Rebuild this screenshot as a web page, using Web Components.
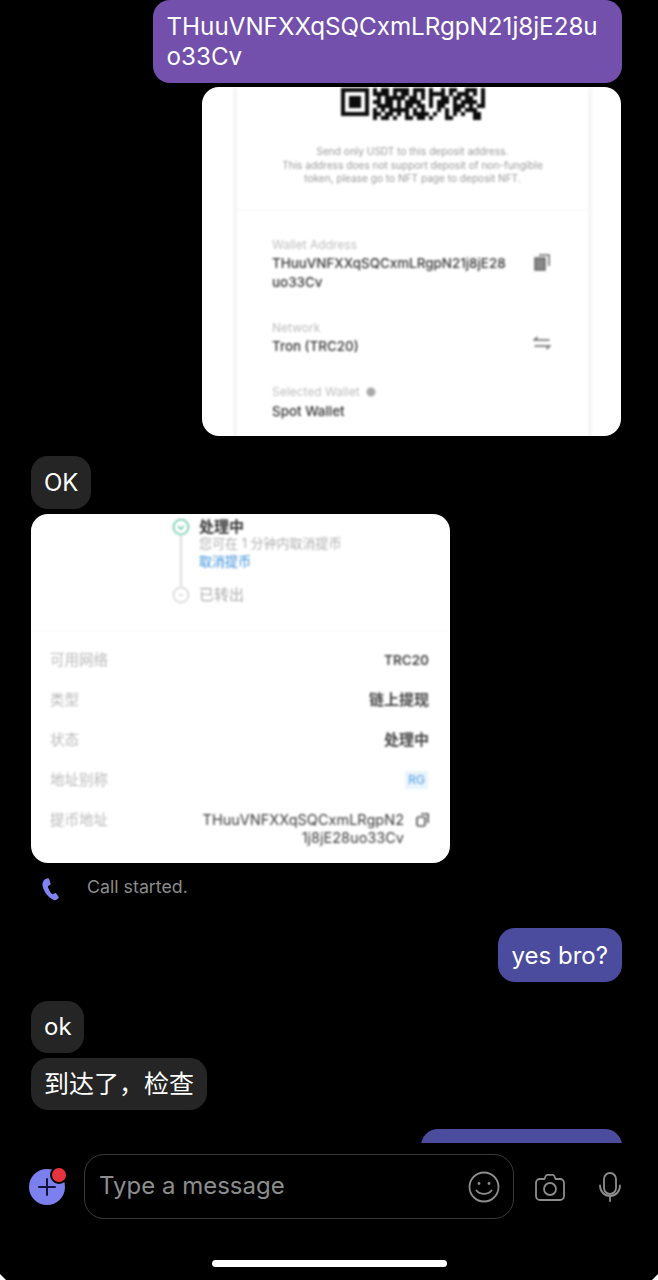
<!DOCTYPE html>
<html lang="en">
<head>
<meta charset="utf-8">
<title>Chat</title>
<style>
  html, body { margin: 0; height: 100%; background: #000; }
  body { font-family: Inter, "Noto Sans CJK SC", sans-serif; overflow: hidden; }
</style>
</head>
<body>
<chat-screen>
  <msg-group side="end" tight>
    <chat-bubble tone="purple">THuuVNFXXqSQCxmLRgpN21j8jE28uo33Cv</chat-bubble>
    <deposit-shot></deposit-shot>
  </msg-group>
  <msg-group>
    <chat-bubble>OK</chat-bubble>
    <withdraw-shot></withdraw-shot>
    <call-note>Call started.</call-note>
  </msg-group>
  <msg-group side="end">
    <chat-bubble tone="blue">yes bro?</chat-bubble>
  </msg-group>
  <msg-group>
    <chat-bubble slim>ok</chat-bubble>
    <chat-bubble slim cjk>到达了，检查</chat-bubble>
  </msg-group>
  <msg-group side="end">
    <chat-bubble tone="blue" blank></chat-bubble>
  </msg-group>
  <composer-bar slot="composer"></composer-bar>
  <home-bar slot="composer"></home-bar>
</chat-screen>

<script>
function shadow(el, html) {
  el.attachShadow({ mode: 'open' }).innerHTML = html;
}

class ChatScreen extends HTMLElement {
  constructor() {
    super();
    shadow(this, `
      <style>
        :host { display: flex; flex-direction: column; height: 1280px; background: #000; overflow: hidden; position: relative; }
        #log { flex: 1; min-height: 0; overflow: hidden; display: flex; flex-direction: column; gap: 19px; padding: 0 36px 0 31px; }
        .corner { position: absolute; bottom: 0; width: 6px; height: 6px; background: #fff; }
        .corner.l { left: 0; clip-path: polygon(0 0, 100% 100%, 0 100%); }
        .corner.r { right: 0; clip-path: polygon(100% 0, 100% 100%, 0 100%); }
      </style>
      <div id="log"><slot></slot></div>
      <slot name="composer"></slot>
      <div class="corner l"></div><div class="corner r"></div>`);
  }
}

class MsgGroup extends HTMLElement {
  constructor() {
    super();
    shadow(this, `
      <style>
        :host { display: flex; flex-direction: column; align-items: flex-start; gap: 5px; flex: none; }
        :host([side="end"]) { align-items: flex-end; }
        :host([tight]) { gap: 4px; padding-bottom: 1px; }
      </style>
      <slot></slot>`);
  }
}

class ChatBubble extends HTMLElement {
  constructor() {
    super();
    shadow(this, `
      <style>
        :host { display: block; box-sizing: border-box; background: #252525; color: #fff; font-size: 24px; line-height: 30px; padding: 12px 13px 11px; border-radius: 17px; }
        :host([slim]) { padding: 11px 12.5px 11px 13px; }
        :host([cjk]) { font-size: 25px; padding-right: 13px; }
        :host([tone="blue"]) { background: #4b4c9e; padding: 13px 14px 11px; }
        :host([tone="purple"]) { background: #7350ac; width: 469px; padding: 12px 14px 11px 13.5px; overflow-wrap: anywhere; font-size: 24.2px; }
        :host([blank]) { width: 201px; height: 54px; }
      </style>
      <slot></slot>`);
  }
}

// screenshot attachment: white card, the photo inside is soft so it gets a blur
class ShotCard extends HTMLElement {
  constructor() {
    super();
    shadow(this, `
      <style>
        :host { display: block; width: 419px; height: 349px; background: #fff; border-radius: 17px; overflow: hidden; font-family: Inter, "Noto Sans CJK SC", sans-serif; }
        #soft { height: 100%; filter: blur(1.1px); }
      </style>
      <div id="soft"><slot></slot></div>`);
  }
}

const QR = [
  '#######.#.##.####.###.#..#.##..###.#',
  '#.....#.####.#.##.#.#.####.#.###.#.#',
  '#.###.#..#.#####.##.#.#..##.##.##..#',
  '#.###.#.##.##.#.####..#.###.#.####.#',
  '#.###.#..####.#.##.##.#.##..###.#.##',
  '#.....#.#.#.#####.#.#...#.#.##.###..',
  '#######.##.##.#.#.####.#..#.#.#..##.',
  '........#.##.#..##.##.#...##.....##.'
];

class DepositShot extends HTMLElement {
  constructor() {
    super();
    const cells = QR.map((row, y) => [...row].map((c, x) =>
      c === '#' ? `<rect x="${x * 4}" y="${y * 4}" width="4" height="4"/>` : '').join('')).join('');
    shadow(this, `
      <style>
        :host { display: block; margin-right: 1px; }
        #panel { height: 100%; margin: 0 29px 0 31px; border: solid #f6f6f6; border-width: 0 4px; box-sizing: border-box; color: #444; }
        #qr { display: block; margin: 1px auto 0; }
        #note { margin: 24px 0 0; text-align: center; font-size: 10.1px; line-height: 13.5px; color: #999; }
        #fields { margin-top: 23px; border-top: 2px solid #fbfbfb; padding: 27px 37px 0 35px; display: flex; flex-direction: column; gap: 29px; }
        .field { display: flex; justify-content: space-between; align-items: flex-start; gap: 12px; }
        .label { font-size: 12px; line-height: 14px; color: #bdbdbd; display: flex; align-items: center; gap: 6px; }
        .value { font-size: 13.4px; line-height: 19px; margin-top: 2px; color: #333; width: 238px; overflow-wrap: anywhere; font-weight: 500; }
        .last { margin-top: 3px; }
        svg.ico { flex: none; margin-top: 15px; }
      </style>
      <shot-card>
        <div id="panel">
          <svg id="qr" width="144" height="33" viewBox="0 0 144 33" fill="#0b0b0b">${cells}</svg>
          <p id="note">Send only USDT to this deposit address.<br>This address does not support deposit of non-fungible<br>token, please go to NFT page to deposit NFT.</p>
          <div id="fields">
            <div class="field">
              <div><div class="label">Wallet Address</div><div class="value">THuuVNFXXqSQCxmLRgpN21j8jE28uo33Cv</div></div>
              <svg class="ico" width="17" height="18" viewBox="0 0 17 18" fill="none" stroke="#666" stroke-width="1.5"><rect x="1" y="5" width="10" height="12" fill="#888"/><path d="M5 2h10v11"/></svg>
            </div>
            <div class="field">
              <div><div class="label">Network</div><div class="value">Tron (TRC20)</div></div>
              <svg class="ico" width="18" height="14" viewBox="0 0 17 14" fill="none" stroke="#666" stroke-width="1.6"><path d="M4 1 1 4h15M13 13l3-3H1"/></svg>
            </div>
            <div class="field">
              <div><div class="label">Selected Wallet <svg width="10" height="10" viewBox="0 0 10 10"><circle cx="5" cy="5" r="4.500" fill="#aaa"/></svg></div><div class="value last">Spot Wallet</div></div>
            </div>
          </div>
        </div>
      </shot-card>`);
  }
}

class WithdrawShot extends HTMLElement {
  constructor() {
    super();
    const row = (k, v) => `<div class="row"><span class="k">${k}</span>${v}</div>`;
    shadow(this, `
      <style>
        :host { display: block; }
        #steps { margin-left: 141px; padding-top: 4px; display: grid; grid-template-columns: 18px 1fr; column-gap: 9px; color: #333; }
        .node { display: flex; flex-direction: column; align-items: center; }
        .line { width: 2px; height: 50px; background: #dcdcdc; }
        .now { font-size: 15px; line-height: 17px; font-weight: 700; }
        .sub { font-size: 13px; line-height: 17px; color: #b0b0b0; }
        .link { font-size: 13px; line-height: 18px; color: #3b8ed8; }
        .done { font-size: 15px; line-height: 18px; color: #aaa; margin-top: 16px; }
        #rows { margin-top: 26px; border-top: 2px solid #fcfcfc; padding: 19px 21px 0 19px; display: flex; flex-direction: column; gap: 22px; font-size: 14.500px; line-height: 18px; }
        .row { display: flex; justify-content: space-between; align-items: flex-start; }
        .k { color: #b8b8b8; }
        .v { color: #444; font-weight: 600; font-size: 15px; }
        .v.en { font-size: 13.5px; }
        .tag { color: #4f9be0; background: #eaf4fd; font-size: 12px; padding: 0 3px; margin-right: 1px; }
        .addr { display: flex; gap: 12px; color: #3a3a3a; font-size: 14.500px; }
        .addr span { width: 203px; text-align: right; overflow-wrap: anywhere; }
        .addr svg { margin-top: 2px; flex: none; }
      </style>
      <shot-card>
        <div id="steps">
          <div class="node">
            <svg width="18" height="18" viewBox="0 0 18 18" fill="none" stroke="#69c9a8" stroke-width="1.6"><circle cx="9" cy="9" r="7.500"/><path d="m6 8 3 3 3-3"/></svg>
            <div class="line"></div>
            <svg width="18" height="18" viewBox="0 0 18 18" fill="none" stroke="#d4d4d4" stroke-width="1.6"><circle cx="9" cy="9" r="7.500"/><path d="M7 9h4"/></svg>
          </div>
          <div>
            <div class="now">处理中</div>
            <div class="sub">您可在 1 分钟内取消提币</div>
            <div class="link">取消提币</div>
            <div class="done">已转出</div>
          </div>
        </div>
        <div id="rows">
          ${row('可用网络', '<span class="v en">TRC20</span>')}
          ${row('类型', '<span class="v">链上提现</span>')}
          ${row('状态', '<span class="v">处理中</span>')}
          ${row('地址别称', '<span class="tag">RG</span>')}
          ${row('提币地址', `<div class="addr"><span>THuuVNFXXqSQCxmLRgpN21j8jE28uo33Cv</span><svg width="13" height="14" viewBox="0 0 13 14" fill="none" stroke="#555" stroke-width="1.7"><rect x="1" y="4" width="8" height="9" rx="1.500"/><path d="M5 1h7v9"/></svg></div>`)}
        </div>
      </shot-card>`);
  }
}

class CallNote extends HTMLElement {
  constructor() {
    super();
    shadow(this, `
      <style>
        :host { display: flex; align-items: center; gap: 27px; margin: 7px 0 10px 11px; color: #8b8b8b; font-size: 17.800px; line-height: 24px; }
        svg { overflow: visible; flex: none; }
      </style>
      <svg width="18" height="24" viewBox="0 -3 19 25"><path fill="#7f84f0" d="M3.200 1.200 6 .3c.7-.2 1.200.1 1.500.8l1.600 4.600c.2.6 0 1.100-.5 1.400L6.800 8.300c-.5.3-.6.8-.4 1.400.7 2.700 2.100 5 4 7 .4.4.9.5 1.400.2l1.700-.9c.6-.3 1.100-.2 1.500.3l2.500 3.400c.4.600.3 1.200-.2 1.600l-1.600 1.500c-.9.800-2 1-3.100.5C6.700 20.700 2.300 15.400.6 8.500.1 5.700.9 2.700 3.200 1.200Z"/></svg>
      <slot></slot>`);
  }
}

class ComposerBar extends HTMLElement {
  constructor() {
    super();
    shadow(this, `
      <style>
        :host { display: flex; align-items: center; height: 76px; padding: 11px 36px 0 29px; box-sizing: border-box; flex: none; }
        #plus { position: relative; width: 36px; height: 36px; border-radius: 50%; background: #7b80ee; flex: none; display: flex; align-items: center; justify-content: center; }
        #dot { position: absolute; right: -3px; top: -3px; width: 14px; height: 14px; border-radius: 50%; background: #e5343f; border: 2px solid #000; }
        #field { margin-left: 19px; flex: none; width: 430px; height: 65px; box-sizing: border-box; border: 1px solid #3a3a3a; border-radius: 20px; display: flex; align-items: center; justify-content: space-between; padding: 0 13px 2px 14px; color: #8d8d8d; font-size: 24px; }
        #field svg { margin-top: 2px; }
        #actions { display: flex; align-items: center; gap: 34px; margin-left: 21px; }
        svg { display: block; }
      </style>
      <div id="plus">
        <svg width="20" height="20" viewBox="0 0 20 20" stroke="#12143c" stroke-width="2" stroke-linecap="round"><path d="M10 2v16M2 10h16"/></svg>
        <div id="dot"></div>
      </div>
      <div id="field">
        <span>Type a message</span>
        <svg width="32" height="32" viewBox="0 0 32 32" fill="none" stroke="#8d8d8d" stroke-width="1.8" stroke-linecap="round"><circle cx="16" cy="16" r="14.500"/><path d="M8.500 19.500c3.500 4.500 11.500 4.500 15 0"/><circle cx="11" cy="12.500" r="1.400" fill="#8d8d8d" stroke="none"/><circle cx="21" cy="12.500" r="1.400" fill="#8d8d8d" stroke="none"/></svg>
      </div>
      <div id="actions">
        <svg width="30" height="28" viewBox="0 0 30 28" fill="none" stroke="#8d8d8d" stroke-width="1.8" stroke-linejoin="round"><path d="M5 6h4.500l1.200-3c.3-.7.9-1.200 1.700-1.200h5.200c.8 0 1.400.5 1.700 1.200L20.500 6H25a4 4 0 0 1 4 4v13a4 4 0 0 1-4 4H5a4 4 0 0 1-4-4V10a4 4 0 0 1 4-4Z"/><circle cx="15" cy="16" r="6"/></svg>
        <svg width="22" height="30" viewBox="0 0 22 30" fill="none" stroke="#8d8d8d" stroke-width="1.8" stroke-linecap="round"><rect x="5" y="1" width="12" height="21" rx="6"/><path d="M1 13.500c0 6 4.500 10.500 10 10.500s10-4.500 10-10.500M11 24v5"/></svg>
      </div>`);
  }
}

class HomeBar extends HTMLElement {
  constructor() {
    super();
    shadow(this, `
      <style>
        :host { display: block; height: 61px; box-sizing: border-box; padding-top: 41px; flex: none; }
        div { width: 235px; height: 7px; margin-left: 212px; border-radius: 4px; background: #fff; }
      </style>
      <div></div>`);
  }
}

customElements.define('chat-screen', ChatScreen);
customElements.define('msg-group', MsgGroup);
customElements.define('chat-bubble', ChatBubble);
customElements.define('shot-card', ShotCard);
customElements.define('deposit-shot', DepositShot);
customElements.define('withdraw-shot', WithdrawShot);
customElements.define('call-note', CallNote);
customElements.define('composer-bar', ComposerBar);
customElements.define('home-bar', HomeBar);
</script>
</body>
</html>
